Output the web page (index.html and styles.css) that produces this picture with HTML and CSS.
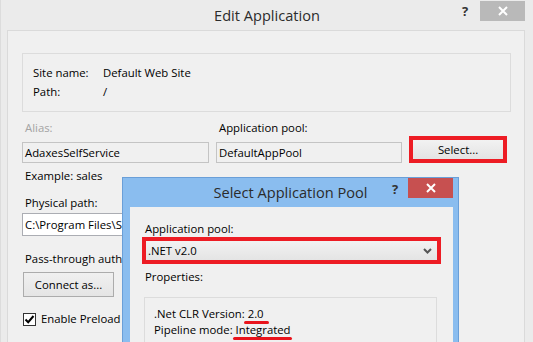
FILE: index.html
```html
<!DOCTYPE html>
<html>
<head>
<meta charset="utf-8">
<link rel="stylesheet" href="styles.css">
</head>
<body>
<div class="win">
  <div class="titlebar">
    <div class="spacer"></div>
    <div class="title">Edit Application</div>
    <div class="controls">
      <div class="help">?</div>
      <div class="close close-inactive">
        <svg width="10" height="10" viewBox="0 0 10 10"><path d="M1 1 L9 9 M9 1 L1 9" stroke="#fff" stroke-width="2"/></svg>
      </div>
    </div>
  </div>
  <div class="panel">
    <div class="group">
      <div class="kv"><span class="k">Site name:</span><span>Default Web Site</span></div>
      <div class="kv"><span class="k">Path:</span><span>/</span></div>
    </div>
    <div class="fields">
      <div class="lbl disabled">Alias:</div>
      <div class="lbl">Application pool:</div>
      <div></div>
      <div class="tb ro">AdaxesSelfService</div>
      <div class="tb ro">DefaultAppPool</div>
      <div class="mark select-mark"><div class="btn-fill">Select...</div></div>
    </div>
    <div class="lbl example">Example: sales</div>
    <div class="lbl phys">Physical path:</div>
    <div class="tb white path">C:\Program Files\S</div>
    <div class="lbl pass">Pass-through auth</div>
    <div class="btn connect">Connect as...</div>
    <div class="check-row">
      <span class="checkbox"><svg width="11" height="11" viewBox="0 0 11 11"><path d="M1.5 5.5 L4.2 8.2 L9.5 2" fill="none" stroke="#000" stroke-width="2"/></svg></span>
      <span>Enable Preload</span>
    </div>
  </div>

  <div class="dialog">
    <div class="titlebar dlg-titlebar">
      <div class="spacer"></div>
      <div class="title">Select Application Pool</div>
      <div class="controls">
        <div class="help dlg-help">?</div>
        <div class="close close-active">
          <svg width="10" height="10" viewBox="0 0 10 10"><path d="M1 1 L9 9 M9 1 L1 9" stroke="#fff" stroke-width="2"/></svg>
        </div>
      </div>
    </div>
    <div class="dlg-panel">
      <div class="lbl dlg-lbl">Application pool:</div>
      <div class="mark combo-mark">
        <div class="combo">
          <span>.NET v2.0</span>
          <svg width="9" height="6" viewBox="0 0 9 6"><path d="M1 1 L4.5 4.5 L8 1" fill="none" stroke="#555" stroke-width="2"/></svg>
        </div>
      </div>
      <div class="lbl props-lbl">Properties:</div>
      <div class="props">
        <div>.Net CLR Version: <span class="ul ul-short">2.0</span></div>
        <div>Pipeline mode: <span class="ul ul-long">Integrated</span></div>
      </div>
    </div>
  </div>
</div>
</body>
</html>
```

FILE: styles.css
```css
html, body {
  margin: 0;
  padding: 0;
}
body {
  width: 533px;
  height: 342px;
  overflow: hidden;
  font-family: "Open Sans", "Liberation Sans", sans-serif;
  font-size: 11.35px;
  color: #000;
  background: #ebebeb;
}
.win {
  position: relative;
  height: 342px;
  overflow: hidden;
  background: #ebebeb;
  border-left: 1px solid #dcdcdc;
  box-sizing: border-box;
}
.titlebar {
  height: 30px;
  display: grid;
  grid-template-columns: 1fr auto 1fr;
  align-items: start;
}
.title {
  font-size: 14.6px;
  color: #2b2b2b;
  line-height: 30px;
  white-space: nowrap;
}
.controls {
  display: flex;
  justify-content: flex-end;
  padding-right: 8px;
  padding-top: 1px;
}
.help {
  width: 26px;
  height: 20px;
  margin-right: 2px;
  text-align: center;
  font-weight: bold;
  font-size: 13px;
  line-height: 20px;
  color: #333;
}
.close {
  width: 45px;
  height: 20px;
  display: flex;
  align-items: center;
  justify-content: center;
}
.close-inactive {
  background: #b9b9b9;
}
.close-active {
  background: #c75050;
}
.panel {
  margin: 0 8px 0 6px;
  height: 312px;
  box-sizing: border-box;
  border: 1px solid #dadada;
  border-bottom: none;
  background: #f0f0f0;
  padding: 22px 13px 0 14px;
}
.group {
  border: 1px solid #dcdcdc;
  padding: 9px 10px 10px 10px;
}
.kv {
  display: flex;
  line-height: 19px;
  height: 19px;
}
.k {
  width: 70px;
}
.fields {
  margin-top: 8px;
  display: grid;
  grid-template-columns: 187px 186px 98px;
  grid-template-rows: 16px 27px;
  column-gap: 7px;
}
.lbl {
  padding-left: 3px;
  line-height: 16px;
  white-space: nowrap;
}
.disabled {
  color: #a3a3a3;
}
.tb {
  box-sizing: border-box;
  height: 21px;
  align-self: end;
  border: 1px solid #b4b4b4;
  padding-left: 2px;
  line-height: 19px;
  white-space: nowrap;
  overflow: hidden;
}
.ro {
  background: #f0f0f0;
  border-color: #c4c4c4;
}
.white {
  background: #fff;
  border-color: #abadb3;
}
.mark {
  box-sizing: border-box;
  border: 4px solid #ed1c24;
}
.select-mark {
  height: 27px;
}
.btn-fill {
  height: 100%;
  background: linear-gradient(#f2f2f2, #e3e3e3);
  text-align: center;
  line-height: 19px;
}
.example {
  margin-top: 5px;
}
.phys {
  margin-top: 11px;
}
.path {
  margin-top: 2px;
  height: 23px;
  line-height: 21px;
  width: 101px;
}
.pass {
  margin-top: 15px;
  width: 97px;
  overflow: hidden;
}
.btn {
  box-sizing: border-box;
  border: 1px solid #acacac;
  background: linear-gradient(#f0f0f0, #e5e5e5);
  text-align: center;
}
.connect {
  margin-top: 5px;
  margin-left: 1px;
  width: 91px;
  height: 25px;
  line-height: 23px;
}
.check-row {
  margin-top: 14px;
  margin-left: 1px;
  display: flex;
  align-items: center;
  gap: 5px;
  line-height: 16px;
}
.checkbox {
  box-sizing: border-box;
  width: 13px;
  height: 13px;
  border: 1px solid #333;
  background: #fff;
  display: flex;
  align-items: center;
  justify-content: center;
}
.dialog {
  position: absolute;
  left: 121px;
  top: 177px;
  width: 337px;
  height: 165px;
  box-sizing: border-box;
  background: #8abdef;
  border: 1px solid #6a9fd8;
  border-bottom: none;
  padding: 0 5px 0 7px;
  overflow: hidden;
}
.dlg-titlebar {
  height: 29px;
  margin-right: -5px;
  margin-left: -7px;
}
.dlg-titlebar .title {
  line-height: 29px;
}
.dlg-titlebar .controls {
  padding-right: 5px;
  padding-top: 0;
}
.dlg-help {
  margin-right: 0;
  line-height: 22px;
}
.dlg-panel {
  background: #f0f0f0;
  height: 135px;
  padding: 14px 12px 0 12px;
}
.dlg-lbl {
  line-height: 16px;
}
.combo-mark {
  height: 27px;
}
.combo {
  height: 100%;
  box-sizing: border-box;
  background: linear-gradient(#f2f2f2, #e4e4e4);
  display: flex;
  align-items: center;
  justify-content: space-between;
  padding: 0 5px 0 2px;
}
.props-lbl {
  margin-top: 5px;
}
.props {
  margin: 12px 4px 0 2px;
  border: 1px solid #dcdcdc;
  border-bottom: none;
  height: 43px;
  padding: 8px 9px 0 9px;
  line-height: 16px;
}
.ul {
  position: relative;
}
.ul::after {
  content: "";
  position: absolute;
  height: 3px;
  bottom: -3px;
  background: #e8141c;
  border-radius: 2px;
}
.ul-short::after {
  left: -4px;
  right: -5px;
}
.ul-long::after {
  left: -3px;
  right: -1px;
}
```
